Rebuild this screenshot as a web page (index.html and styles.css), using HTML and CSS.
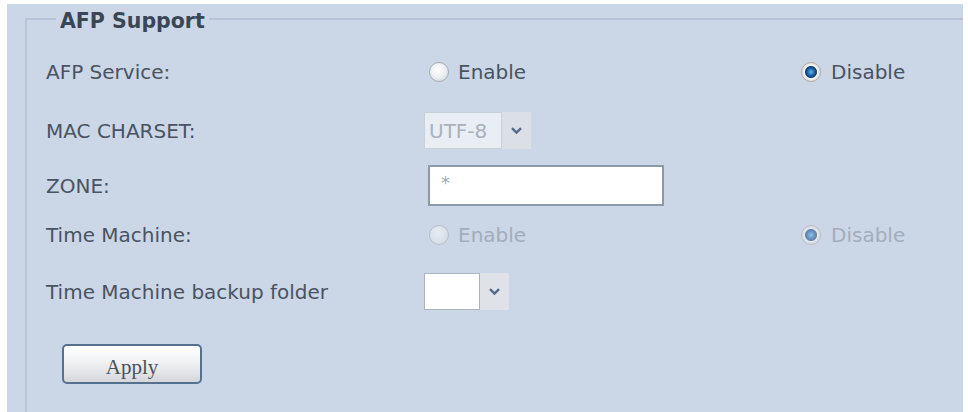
FILE: index.html
```html
<!DOCTYPE html>
<html>
<head>
<meta charset="utf-8">
<link rel="stylesheet" href="styles.css">
</head>
<body>
<div class="panel">
  <fieldset class="group">
    <legend class="group-title">AFP Support</legend>
    <div class="form">
      <div class="label">AFP Service:</div>
      <label class="opt"><input class="radio" type="radio" name="afp"><span>Enable</span></label>
      <label class="opt opt-right"><input class="radio" type="radio" name="afp" checked><span>Disable</span></label>

      <div class="label">MAC CHARSET:</div>
      <div class="select select-disabled">
        <span class="select-value">UTF-8</span>
        <span class="select-arrow"><svg width="11" height="7" viewBox="0 0 11 7"><path d="M1 1.2 L5.5 5.6 L10 1.2" fill="none" stroke="#55698a" stroke-width="2.4"/></svg></span>
      </div>
      <div></div>

      <div class="label">ZONE:</div>
      <div class="input">*</div>
      <div></div>

      <div class="label">Time Machine:</div>
      <label class="opt opt-disabled"><input class="radio" type="radio" name="tm" disabled><span>Enable</span></label>
      <label class="opt opt-right opt-disabled"><input class="radio" type="radio" name="tm" checked disabled><span>Disable</span></label>

      <div class="label">Time Machine backup folder</div>
      <div class="select select-folder">
        <span class="select-value"></span>
        <span class="select-arrow"><svg width="11" height="7" viewBox="0 0 11 7"><path d="M1 1.2 L5.5 5.6 L10 1.2" fill="none" stroke="#55698a" stroke-width="2.4"/></svg></span>
      </div>
      <div></div>
    </div>
    <button class="apply" type="button">Apply</button>
  </fieldset>
</div>
</body>
</html>
```

FILE: styles.css
```css
html, body {
  margin: 0;
  padding: 0;
  background: #ffffff;
  height: 100%;
  overflow: hidden;
}

body {
  font-family: "DejaVu Sans", Verdana, sans-serif;
  font-size: 20px;
  color: #4a5361;
}

.panel {
  margin: 4px 5px 0 7px;
  padding-top: 1px;
  background: #cbd6e7;
  height: 408px;
  box-sizing: border-box;
}

.group {
  margin: 0 0 0 18px;
  padding: 0 0 0 19px;
  border: 2px solid #b7c3d6;
  border-right: none;
  border-bottom: none;
  min-width: 0;
  height: 407px;
  box-sizing: border-box;
}

.group-title {
  margin-left: 10px;
  padding: 4px 4px 0;
  font-weight: bold;
  font-size: 20.5px;
  line-height: 24px;
  color: #3a4656;
}

.form {
  display: grid;
  grid-template-columns: 378px 379px 1fr;
  grid-template-rows: 48px 69px 41px 58px 55px;
  align-items: center;
  padding-top: 15px;
}

.label {
  line-height: 24px;
  white-space: nowrap;
}

.opt {
  display: flex;
  align-items: center;
  gap: 9px;
  margin-left: 5px;
  line-height: 24px;
}

.opt-right {
  margin-left: -2px;
  gap: 10px;
}

.opt-disabled {
  color: #a3adbb;
}

.opt-disabled .radio {
  opacity: 0.55;
}

.radio {
  appearance: none;
  -webkit-appearance: none;
  margin: 0;
  width: 20px;
  height: 20px;
  border-radius: 50%;
  border: 1px solid #a7adb5;
  box-sizing: border-box;
  background: radial-gradient(circle at 42% 38%, #ffffff 0%, #eef0f2 45%, #cdd2d8 100%);
  flex: none;
}

.radio:checked {
  border-color: #b3aca6;
  background: radial-gradient(circle at 50% 50%,
    #6fb4e6 0px, #2f7cbf 2.5px, #134f8d 4.5px, #0f3f73 5.5px,
    #f6f6f6 6.5px, #e8e9ea 8px, #cfd2d6 10px);
}

.select {
  display: flex;
  height: 37px;
  width: 107px;
  box-sizing: border-box;
}

.select-value {
  display: flex;
  align-items: center;
  width: 78px;
  box-sizing: border-box;
  padding-left: 4px;
  color: #a9b1bc;
  background: #e9eef5;
  border: 1px solid #c8d0da;
}

.select-arrow {
  display: flex;
  align-items: center;
  justify-content: center;
  width: 29px;
  background: #dbe0e7;
}

.select-folder {
  width: 85px;
}

.select-folder .select-value {
  width: 56px;
  background: #ffffff;
  border: 1px solid #aab3bf;
}

.select-folder .select-arrow {
  background: #dfe3e9;
}

.input {
  width: 236px;
  height: 41px;
  box-sizing: border-box;
  margin-left: 4px;
  border: 2px solid #8f9aa8;
  background: #ffffff;
  color: #a0a8b3;
  padding: 6px 0 0 11px;
  font-size: 18px;
  line-height: 20px;
}

.apply {
  display: block;
  margin: 25px 0 0 16px;
  width: 140px;
  height: 40px;
  box-sizing: border-box;
  border: 2px solid #56718f;
  border-radius: 5px;
  background: linear-gradient(#ffffff 0%, #f1f2f4 45%, #d4d7dc 100%);
  font-family: "Liberation Serif", "Times New Roman", serif;
  font-size: 21px;
  color: #4b515a;
  padding: 5px 0 0 0;
  line-height: 24px;
}
```
